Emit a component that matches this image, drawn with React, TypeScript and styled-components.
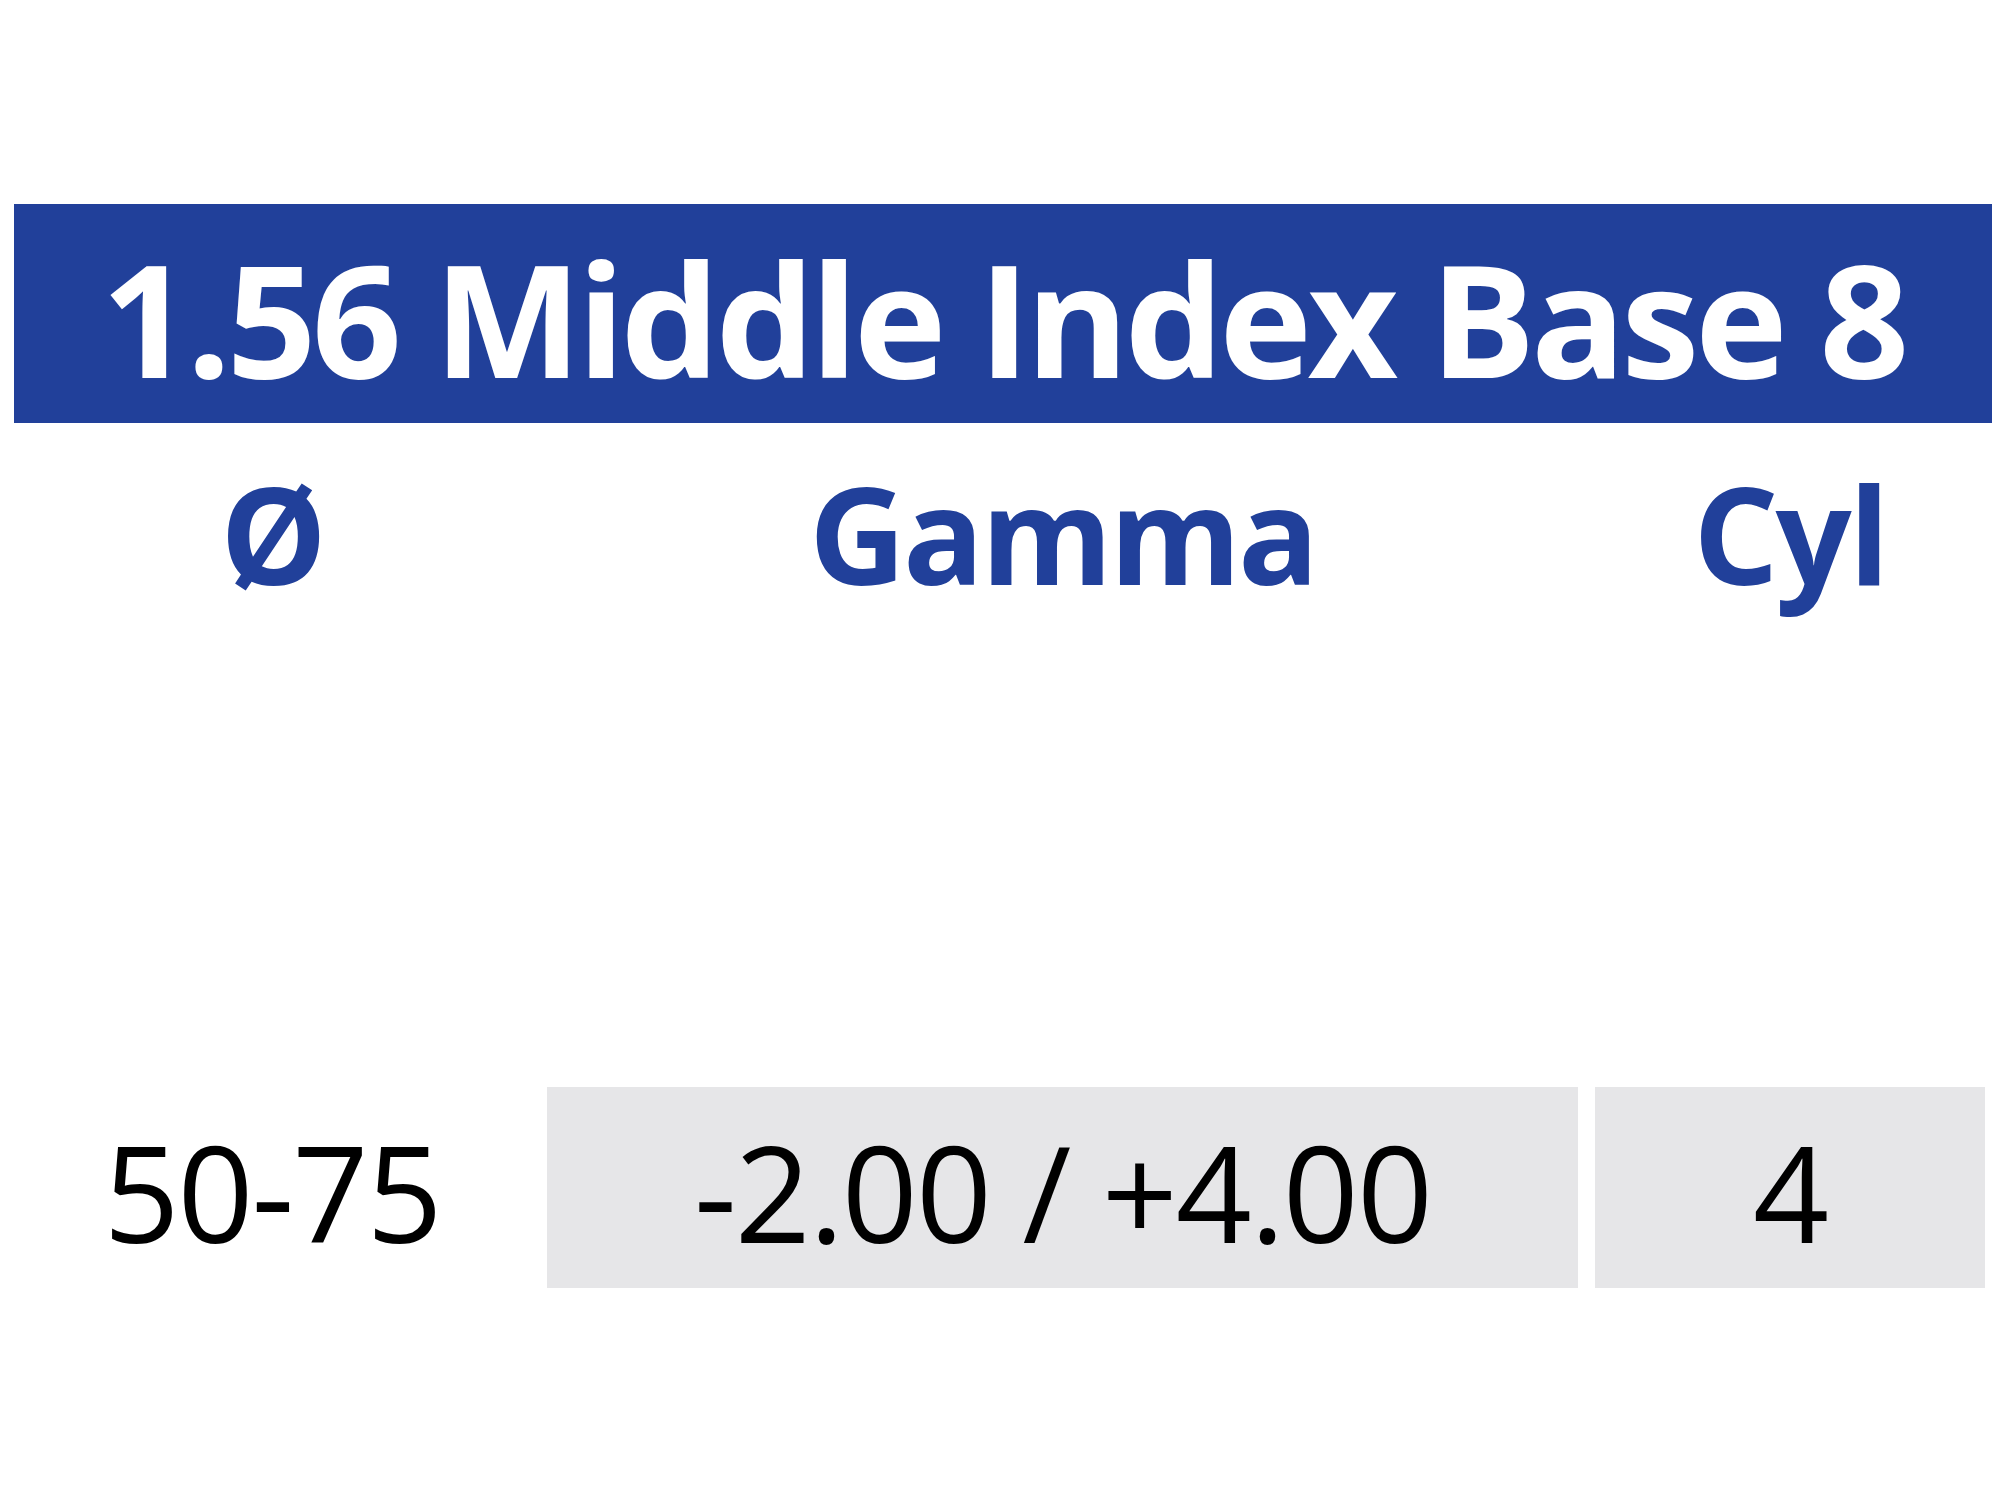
import React from "react";
import styled, { createGlobalStyle } from "styled-components";

const Global = createGlobalStyle`
  html, body { margin: 0; padding: 0; background: #ffffff; }
  body { font-family: "Open Sans", "Noto Sans", sans-serif; }
`;

const Page = styled.div`
  width: 2000px;
  height: 1500px;
  box-sizing: border-box;
  padding: 204px 0 0 14px;
`;

const TitleBar = styled.h1`
  margin: 0;
  width: 1978px;
  box-sizing: border-box;
  padding: 35px 0 27px;
  background: #21409a;
  color: #ffffff;
  font-family: "Open Sans", sans-serif;
  font-weight: 700;
  font-size: 157px;
  line-height: 1;
  text-align: center;
  letter-spacing: -4.5px;
  white-space: nowrap;
`;

const Table = styled.div`
  display: grid;
  grid-template-columns: 516px 1031px 390px;
  column-gap: 17px;
`;

const HeaderRow = styled(Table)`
  margin-top: 43px;
`;

const DataRow = styled(Table)`
  margin-top: 487px;
`;

const HeadCell = styled.div`
  color: #21409a;
  font-weight: 700;
  font-size: 134px;
  line-height: 1;
  text-align: center;
  letter-spacing: -3px;
  white-space: nowrap;
`;

const Cell = styled.div<{ $shaded?: boolean }>`
  background: ${(p) => (p.$shaded ? "#e6e6e8" : "transparent")};
  color: #000000;
  font-weight: 400;
  font-size: 133px;
  line-height: 1;
  padding: 38px 0 30px;
  text-align: center;
  letter-spacing: -2px;
  white-space: nowrap;
`;

export default function App() {
  return (
    <>
      <Global />
      <Page>
        <TitleBar>1.56 Middle Index Base 8</TitleBar>
        <HeaderRow>
          <HeadCell>Ø</HeadCell>
          <HeadCell>Gamma</HeadCell>
          <HeadCell>Cyl</HeadCell>
        </HeaderRow>
        <DataRow>
          <Cell>50-75</Cell>
          <Cell $shaded>-2.00 / +4.00</Cell>
          <Cell $shaded>4</Cell>
        </DataRow>
      </Page>
    </>
  );
}
